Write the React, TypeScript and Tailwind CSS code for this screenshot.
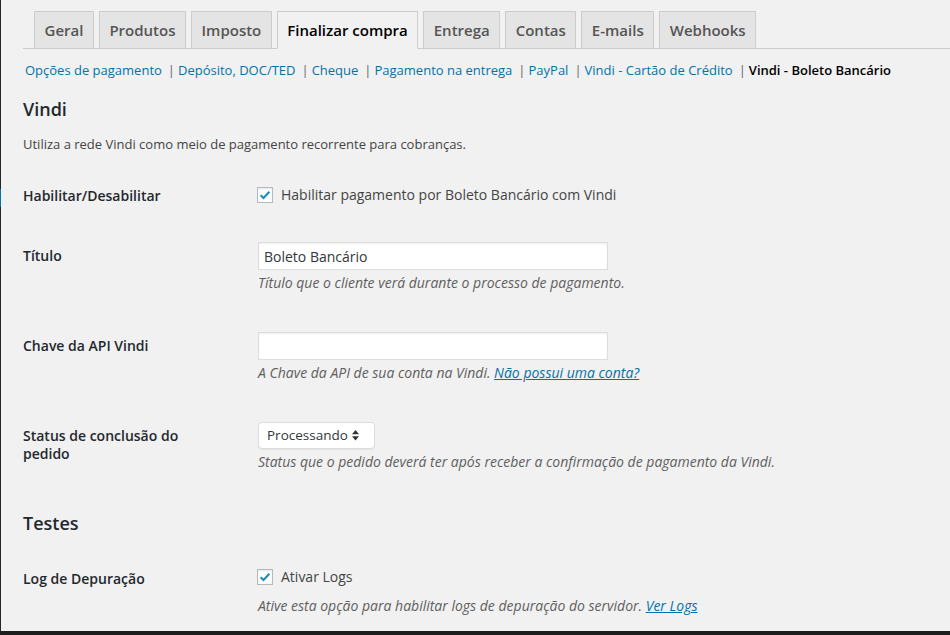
import React from 'react'

const tabs = ['Geral', 'Produtos', 'Imposto', 'Finalizar compra', 'Entrega', 'Contas', 'E-mails', 'Webhooks']
const sections = [
  'Opções de pagamento',
  'Depósito, DOC/TED',
  'Cheque',
  'Pagamento na entrega',
  'PayPal',
  'Vindi - Cartão de Crédito',
  'Vindi - Boleto Bancário',
]

function Checkbox() {
  return (
    <span className="w-4 h-4 shrink-0 -ml-px border border-[#b4b9be] bg-white shadow-[inset_0_1px_2px_rgba(0,0,0,0.1)] flex items-center justify-center">
      <svg viewBox="0 0 16 16" className="w-[14px] h-[14px]">
        <path d="M3 8.2l3.3 3.3L13 4.2" stroke="#1e8cbe" strokeWidth="2.4" fill="none" />
      </svg>
    </span>
  )
}

function Label({ children, pt }: { children: React.ReactNode; pt: string }) {
  return (
    <div className={`w-[235px] shrink-0 ${pt}`}>
      <div className="w-[200px] text-[14px] font-semibold leading-[18px] text-[#23282d]">{children}</div>
    </div>
  )
}

function Desc({ children }: { children: React.ReactNode }) {
  return <p className="mt-[4px] text-[14px] italic leading-[18px] text-[#5f5f5f]">{children}</p>
}

export default function App() {
  return (
    <div className="h-[635px] flex flex-col bg-[#1d1d1d] font-['Open_Sans',sans-serif] overflow-hidden">
      <div className="flex flex-1">
        {/* admin menu edge */}
        <div className="w-px flex flex-col bg-[#23282d]">
          <div className="h-[189px]" />
          <div className="h-[18px] bg-[#0073aa]" />
        </div>

        <div className="flex-1 bg-[#f1f1f1] pl-[22px]">
          {/* tabs */}
          <div className="flex items-end gap-[5px] pl-[11px] pt-[11px] border-b border-[#ccc]">
            {tabs.map((t) => (
              <div
                key={t}
                className={
                  t === 'Finalizar compra'
                    ? 'h-[38px] -mb-px px-[9.5px] flex items-center border border-[#ccc] border-b-[#f1f1f1] bg-[#f1f1f1] text-[15px] font-semibold text-black'
                    : 'h-[38px] -mb-px px-[9.5px] flex items-center border border-[#ccc] bg-[#e4e4e4] text-[15px] font-semibold text-[#555]'
                }
              >
                {t}
              </div>
            ))}
          </div>

          {/* subsections */}
          <ul className="mt-[11px] flex text-[13px] leading-[20px] pl-[2px]">
            {sections.map((s, i) => (
              <li key={s} className="flex">
                {i === sections.length - 1 ? (
                  <span className="font-semibold text-black">{s}</span>
                ) : (
                  <>
                    <a className="text-[#0073aa]">{s}</a>
                    <span className="pl-[6px] pr-[3px] text-[#666]">|</span>
                  </>
                )}
              </li>
            ))}
          </ul>

          <h3 className="mt-[17px] text-[18px] font-semibold leading-[24px] text-[#23282d]">Vindi</h3>
          <p className="mt-[13px] text-[13px] leading-[20px] text-[#444]">
            Utiliza a rede Vindi como meio de pagamento recorrente para cobranças.
          </p>

          {/* Habilitar */}
          <div className="mt-[32px] flex">
            <Label pt="pt-px">Habilitar/Desabilitar</Label>
            <div className="h-[18px] flex items-center gap-[8px]">
              <Checkbox />
              <span className="text-[14px] leading-[18px] text-[#444]">Habilitar pagamento por Boleto Bancário com Vindi</span>
            </div>
          </div>

          {/* Titulo */}
          <div className="mt-[37px] flex">
            <Label pt="pt-[5px]">Título</Label>
            <div>
              <input
                readOnly
                value="Boleto Bancário"
                className="w-[350px] h-[28px] px-[5px] bg-white border border-[#ddd] shadow-[inset_0_1px_2px_rgba(0,0,0,0.07)] text-[14px] text-[#32373c] outline-none"
              />
              <Desc>Título que o cliente verá durante o processo de pagamento.</Desc>
            </div>
          </div>

          {/* API key */}
          <div className="mt-[40px] flex">
            <Label pt="pt-[5px]">Chave da API Vindi</Label>
            <div>
              <input
                readOnly
                value=""
                className="w-[350px] h-[28px] px-[5px] bg-white border border-[#ddd] shadow-[inset_0_1px_2px_rgba(0,0,0,0.07)] text-[14px] outline-none"
              />
              <Desc>
                A Chave da API de sua conta na Vindi. <a className="text-[#0073aa] underline">Não possui uma conta?</a>
              </Desc>
            </div>
          </div>

          {/* Status */}
          <div className="mt-[40px] flex">
            <Label pt="pt-[5px]">Status de conclusão do pedido</Label>
            <div>
              <div className="w-[117px] h-[27px] pl-[8px] pr-[15px] flex items-center bg-white border border-[#ddd] rounded-[4px] shadow-[0_1px_1px_rgba(0,0,0,0.05)]">
                <span className="text-[13.5px] text-[#32373c]">Processando</span>
                <svg width="7" height="11" viewBox="0 0 7 11" className="ml-auto shrink-0">
                  <path d="M0 4.2L3.5 0L7 4.2Z" fill="#333" />
                  <path d="M0 6.3L3.5 10.5L7 6.3Z" fill="#333" />
                </svg>
              </div>
              <Desc>Status que o pedido deverá ter após receber a confirmação de pagamento da Vindi.</Desc>
            </div>
          </div>

          <h3 className="mt-[40px] text-[18px] font-semibold leading-[24px] text-[#23282d]">Testes</h3>

          {/* Logs */}
          <div className="mt-[33px] flex">
            <Label pt="pt-[2px]">Log de Depuração</Label>
            <div>
              <div className="h-[18px] flex items-center gap-[8px]">
                <Checkbox />
                <span className="text-[14px] leading-[18px] text-[#444]">Ativar Logs</span>
              </div>
              <p className="mt-[11px] text-[14px] italic leading-[18px] text-[#5f5f5f]">
                Ative esta opção para habilitar logs de depuração do servidor.{' '}
                <a className="text-[#0073aa] underline">Ver Logs</a>
              </p>
            </div>
          </div>
        </div>
      </div>
      <div className="h-[4px] bg-[#1d1d1d]" />
    </div>
  )
}
